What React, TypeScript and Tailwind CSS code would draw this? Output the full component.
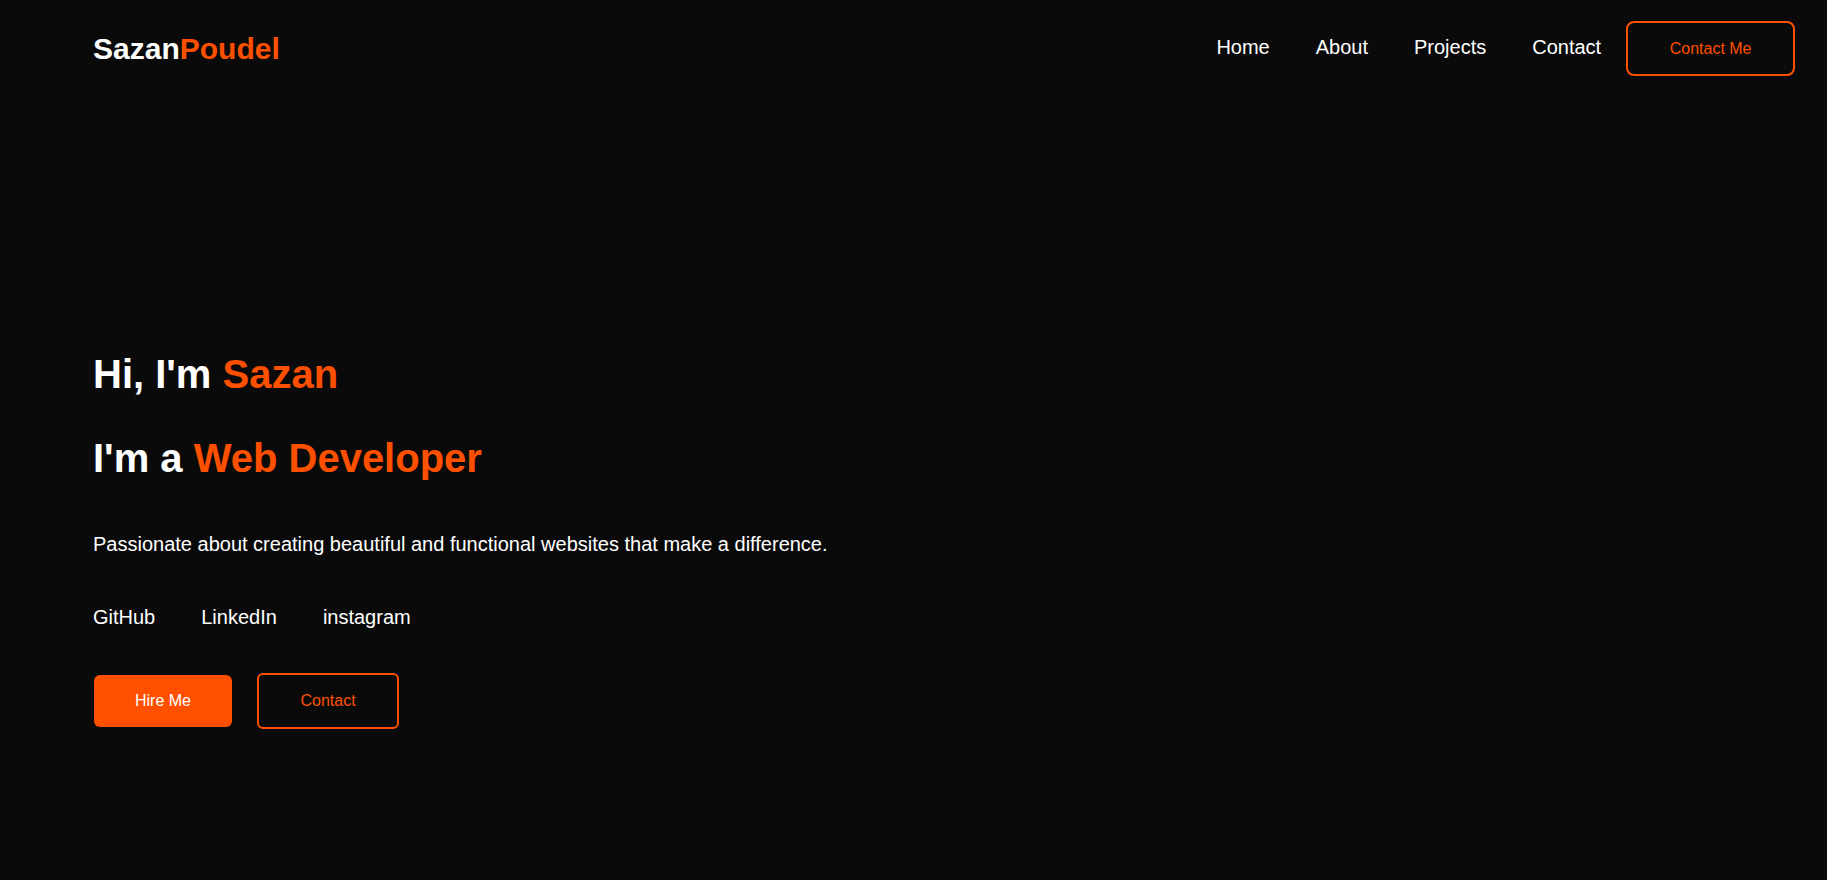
import React from 'react';

const links = ['Home', 'About', 'Projects', 'Contact'];
const socials = ['GitHub', 'LinkedIn', 'instagram'];

const Navbar = () => (
  <nav className="flex items-center justify-between py-[21px] pl-[93px] pr-[32px]">
    <a href="#" className="text-[30px] font-bold leading-[normal] text-white">
      Sazan<span className="text-[#ff5000]">Poudel</span>
    </a>
    <div className="flex items-center">
      <ul className="-mt-[3px] flex items-center gap-[46px]">
        {links.map((link) => (
          <li key={link}>
            <a href="#" className="text-[20px] leading-[28px] text-white">
              {link}
            </a>
          </li>
        ))}
      </ul>
      <button className="ml-[25px] rounded-lg border-2 border-[#ff5000] px-[41.5px] pt-[17px] pb-[16px] text-base leading-[normal] text-[#ff5000]">
        Contact Me
      </button>
    </div>
  </nav>
);

const Hero = () => (
  <section className="flex min-h-screen flex-col justify-center pl-[93px] pt-[4px]">
    <h1 className="text-[40px] font-bold leading-[48px] text-white">
      Hi, I'm <span className="text-[#ff5000]">Sazan</span>
    </h1>
    <h2 className="mt-9 text-[40px] font-bold leading-[48px] text-white">
      I'm a <span className="text-[#ff5000]">Web Developer</span>
    </h2>
    <p className="mt-12 text-[20px] leading-[28px] text-white">
      Passionate about creating beautiful and functional websites that make a difference.
    </p>
    <div className="mt-[45px] flex gap-[46px]">
      {socials.map((s) => (
        <a key={s} href="#" className="text-[20px] leading-[28px] text-white">
          {s}
        </a>
      ))}
    </div>
    <div className="ml-px mt-[42px] flex items-center gap-[25px]">
      <button className="rounded-md bg-[#ff5000] px-[41px] py-4 text-base leading-5 text-white">
        Hire Me
      </button>
      <button className="rounded-md border-2 border-[#ff5000] px-[41.5px] py-4 text-base leading-5 text-[#ff5000]">
        Contact
      </button>
    </div>
  </section>
);

export default function App() {
  return (
    <div className="min-h-screen bg-[#0a0a0a] font-['Liberation_Sans',Arial,sans-serif]">
      <Navbar />
      <Hero />
    </div>
  );
}
